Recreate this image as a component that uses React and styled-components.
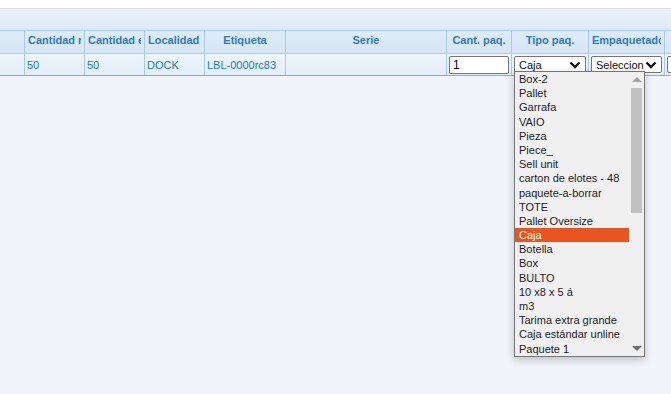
import React from "react";
import styled, { createGlobalStyle } from "styled-components";

const GlobalStyle = createGlobalStyle`
  html, body {
    margin: 0;
    padding: 0;
    background: #f1f5f9;
    font-family: "Liberation Sans", Arial, sans-serif;
    overflow: hidden;
  }
`;

const columns = [
  { title: "", width: 25 },
  { title: "Cantidad recibida", width: 60, align: "left" },
  { title: "Cantidad esperada", width: 60, align: "left" },
  { title: "Localidad", width: 60, align: "left" },
  { title: "Etiqueta", width: 81 },
  { title: "Serie", width: 161 },
  { title: "Cant. paq.", width: 65 },
  { title: "Tipo paq.", width: 77 },
  { title: "Empaquetado", width: 76, align: "left" },
  { title: "", width: 60 },
];

const options = [
  "Box-2",
  "Pallet",
  "Garrafa",
  "VAIO",
  "Pieza",
  "Piece_",
  "Sell unit",
  "carton de elotes - 48",
  "paquete-a-borrar",
  "TOTE",
  "Pallet Oversize",
  "Caja",
  "Botella",
  "Box",
  "BULTO",
  "10 x8 x 5 á",
  "m3",
  "Tarima extra grande",
  "Caja estándar unline",
  "Paquete 1",
];

export default function App() {
  return (
    <>
      <GlobalStyle />
      <Page>
        <TopStrip />
        <Toolbar />
        <Grid>
          <HeaderRow>
            {columns.map((c, i) => (
              <HeadCell key={i} $w={c.width} $align={c.align}>
                <span>{c.title}</span>
              </HeadCell>
            ))}
          </HeaderRow>
          <DataRow>
            <Cell $w={25} />
            <Cell $w={60}>50</Cell>
            <Cell $w={60}>50</Cell>
            <Cell $w={60}>DOCK</Cell>
            <Cell $w={81}>LBL-0000rc83</Cell>
            <Cell $w={161} />
            <Cell $w={65}>
              <QtyInput defaultValue="1" />
            </Cell>
            <Cell $w={77}>
              <SelectBox>
                <span>Caja</span>
                <Chevron />
              </SelectBox>
              <Dropdown>
                <OptionList>
                  {options.map((o) => (
                    <Option key={o} $selected={o === "Caja"}>
                      {o}
                    </Option>
                  ))}
                </OptionList>
                <ScrollTrack>
                  <ArrowUp />
                  <Thumb />
                  <ArrowDown />
                </ScrollTrack>
              </Dropdown>
            </Cell>
            <Cell $w={76}>
              <SelectBox $w={71}>
                <span>Selecciona</span>
                <Chevron />
              </SelectBox>
            </Cell>
            <Cell $w={60}>
              <SelectBox $w={40} />
            </Cell>
          </DataRow>
        </Grid>
      </Page>
    </>
  );
}

function Chevron() {
  return (
    <ChevronIcon viewBox="0 0 12 8" width="12" height="8">
      <path d="M1.5 1.5 L6 6 L10.5 1.5" fill="none" stroke="#111" strokeWidth="2.4" />
    </ChevronIcon>
  );
}

const Page = styled.div`
  width: 671px;
  height: 394px;
  overflow: hidden;
  background: #f1f5f9;
`;

const TopStrip = styled.div`
  height: 8px;
  background: #fff;
  border-bottom: 1px solid #dcdee0;
`;

const Toolbar = styled.div`
  height: 21px;
  background: linear-gradient(#ebf3fb, #dde9f6);
  border-bottom: 1px solid #a8cbe8;
`;

const Grid = styled.div`
  width: 760px;
`;

const HeaderRow = styled.div`
  display: flex;
  height: 22px;
  background: linear-gradient(#dfebf8, #d7e6f5);
  border-bottom: 1px solid #a8cbe8;
`;

const HeadCell = styled.div`
  flex: 0 0 ${(p) => p.$w}px;
  min-width: 0;
  box-sizing: border-box;
  border-right: 1px solid #a8cbe8;
  padding: 3px 3px 0;
  font-size: 11px;
  font-weight: bold;
  color: #2f7cbd;
  text-align: ${(p) => p.$align || "center"};

  span {
    display: block;
    white-space: nowrap;
    overflow: hidden;
  }
`;

const DataRow = styled.div`
  display: flex;
  height: 21px;
  background: linear-gradient(#edf5fc, #e3eef9);
  border-bottom: 1px solid #7fb0dc;
`;

const Cell = styled.div`
  position: relative;
  flex: 0 0 ${(p) => p.$w}px;
  min-width: 0;
  box-sizing: border-box;
  border-right: 1px solid #a8cbe8;
  padding: 0 2px;
  display: flex;
  align-items: center;
  font-size: 11px;
  color: #1f7cc6;
  white-space: nowrap;
`;

const QtyInput = styled.input`
  box-sizing: border-box;
  width: 60px;
  height: 18px;
  margin: 1px 0 0 0;
  padding: 0 3px;
  border: 1px solid #767676;
  border-radius: 2px;
  background: #fff;
  font-family: "Liberation Sans", Arial, sans-serif;
  font-size: 12px;
  color: #000;
  outline: none;
`;

const SelectBox = styled.div`
  box-sizing: border-box;
  flex: 0 0 auto;
  width: ${(p) => p.$w || 72}px;
  height: 17px;
  padding: 0 4px;
  display: flex;
  align-items: center;
  justify-content: space-between;
  border: 1px solid #767676;
  border-radius: 2px;
  background: #fff;
  font-size: 11px;
  color: #111;
  overflow: hidden;

  span {
    min-width: 0;
    overflow: hidden;
    white-space: nowrap;
    flex: 1;
  }
`;

const ChevronIcon = styled.svg`
  flex: 0 0 12px;
  margin-left: 1px;
`;

const Dropdown = styled.div`
  position: absolute;
  top: 17px;
  left: 2px;
  z-index: 5;
  box-sizing: border-box;
  width: 131px;
  height: 286px;
  display: flex;
  border: 1px solid #767676;
  background: #f0f0f0;
  box-shadow: 0 3px 8px rgba(0, 0, 0, 0.22);
`;

const OptionList = styled.div`
  flex: 0 0 114px;
  display: flex;
  flex-direction: column;
`;

const Option = styled.div`
  height: 14.2px;
  line-height: 14.2px;
  padding-left: 4px;
  font-size: 11px;
  color: ${(p) => (p.$selected ? "#fff" : "#1d1d28")};
  background: ${(p) => (p.$selected ? "#e95420" : "transparent")};
  white-space: nowrap;
  overflow: hidden;
`;

const ScrollTrack = styled.div`
  flex: 1;
  display: flex;
  flex-direction: column;
  align-items: center;
  padding: 5px 0 3px;
`;

const ArrowUp = styled.div`
  width: 0;
  height: 0;
  border-left: 5px solid transparent;
  border-right: 5px solid transparent;
  border-bottom: 5px solid #a3a3a3;
`;

const ArrowDown = styled.div`
  margin-top: auto;
  margin-bottom: 2px;
  width: 0;
  height: 0;
  border-left: 5px solid transparent;
  border-right: 5px solid transparent;
  border-top: 5px solid #6e6e6e;
`;

const Thumb = styled.div`
  margin-top: 6px;
  width: 11px;
  height: 125px;
  background: #c1c1c1;
`;
